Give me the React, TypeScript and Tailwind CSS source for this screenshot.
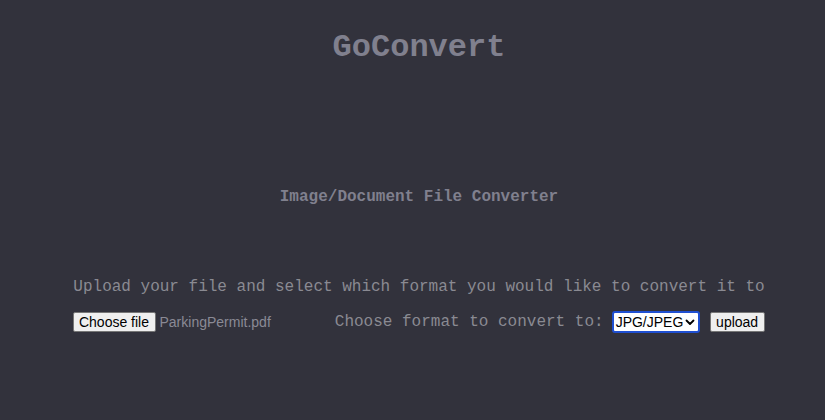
const mono = "font-['Liberation_Mono','Courier_New',monospace]";
const sans = "font-['Liberation_Sans',Arial,sans-serif]";

export default function App() {
  return (
    <div className={`min-h-[420px] w-full bg-[#32323c] ${mono} text-[#80808e]`}>
      <div className="flex flex-col items-center pl-[13px]">
        <h1 className="mt-[28px] text-[32px] font-bold leading-[40px]">GoConvert</h1>
        <h2 className="mt-[119px] text-[16px] font-bold leading-[20px]">Image/Document File Converter</h2>
        <p className="mt-[70px] whitespace-nowrap text-[16px] leading-[20px] text-[#8a8a92]">
          Upload your file and select which format you would like to convert it to
        </p>
        <form className="mt-[13px] flex w-[693px] items-center whitespace-nowrap" onSubmit={(e) => e.preventDefault()}>
          <button
            type="button"
            className={`h-[20px] w-[83px] shrink-0 rounded-[2px] border border-[#767676] bg-[#efefef] text-[14px] leading-none text-black ${sans}`}
          >
            Choose file
          </button>
          <span className={`ml-[4px] text-[14px] text-[#8a8a95] ${sans}`}>ParkingPermit.pdf</span>
          <span className="ml-[64px] shrink-0 text-[16px] text-[#8a8a92]">Choose format to convert to:</span>
          <div
            className={`ml-[8px] flex h-[22px] w-[88px] shrink-0 items-center justify-between rounded-[3px] border-2 border-[#1f4fd1] bg-white pl-[2px] pr-[3px] text-[14px] text-black ${sans}`}
          >
            <span>JPG/JPEG</span>
            <svg width="10" height="7" viewBox="0 0 10 7" fill="none">
              <path d="M1.5 1.5 5 5l3.5-3.5" stroke="#000" strokeWidth="1.8" strokeLinecap="round" strokeLinejoin="round" />
            </svg>
          </div>
          <button
            type="submit"
            className={`ml-[10px] h-[20px] w-[55px] shrink-0 rounded-[2px] border border-[#767676] bg-[#efefef] text-[14px] leading-none text-black ${sans}`}
          >
            upload
          </button>
        </form>
      </div>
    </div>
  );
}
